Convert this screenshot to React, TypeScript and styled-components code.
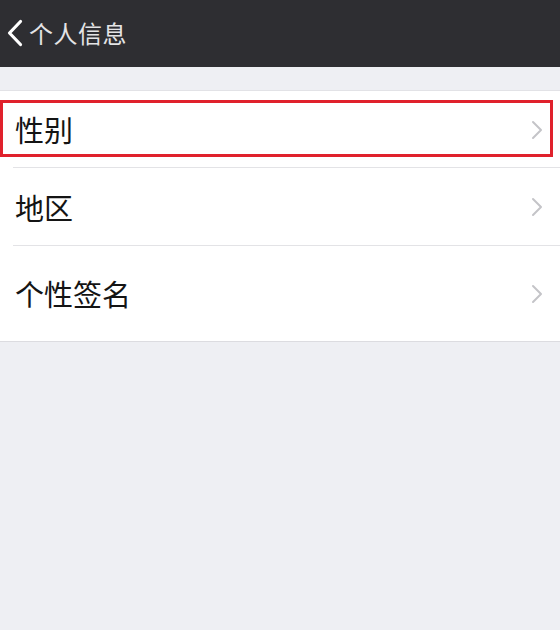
import React from "react";
import styled, { createGlobalStyle } from "styled-components";

const Global = createGlobalStyle`
  html, body { margin: 0; padding: 0; background: #eeeff3; }
  body { font-family: "Noto Sans CJK SC", "Noto Sans", sans-serif; }
`;

const Page = styled.div`
  width: 560px;
  height: 630px;
  background: #eeeff3;
  display: flex;
  flex-direction: column;
  overflow: hidden;
`;

const NavBar = styled.div`
  height: 67px;
  background: #2e2e32;
  display: flex;
  align-items: center;
  padding-left: 6px;
  gap: 5px;
  box-sizing: border-box;
  padding-bottom: 1px;
`;

const NavTitle = styled.span`
  color: #e4e4e6;
  font-size: 24px;
  line-height: 1;
  letter-spacing: 0.5px;
`;

const Spacer = styled.div`
  height: 23px;
`;

const List = styled.div`
  background: #ffffff;
  border-top: 1px solid #e2e2e6;
  border-bottom: 1px solid #dcdce0;
  display: flex;
  flex-direction: column;
`;

const Row = styled.div<{ $h: number; $last?: boolean }>`
  position: relative;
  height: ${(p) => p.$h}px;
  display: flex;
  align-items: center;
  padding-left: 15px;
  padding-right: 17px;
  box-sizing: border-box;
  &::after {
    content: "";
    display: ${(p) => (p.$last ? "none" : "block")};
    position: absolute;
    left: 13px;
    right: 0;
    bottom: 0;
    height: 1px;
    background: #e3e3e6;
  }
`;

const Highlight = styled.div`
  position: absolute;
  left: 0;
  top: 9px;
  width: 553px;
  height: 57px;
  border: 3px solid #e0212c;
  box-sizing: border-box;
  pointer-events: none;
`;

const Label = styled.span`
  flex: 1;
  font-size: 29px;
  color: #141414;
  line-height: 1;
`;

const BackIcon = () => (
  <svg width="18" height="28" viewBox="0 0 18 28">
    <path d="M14.5 2.5 L3.5 14 L14.5 25.5" fill="none" stroke="#ffffff" strokeWidth="3.2" strokeLinecap="round" strokeLinejoin="round" />
  </svg>
);

const Chevron = () => (
  <svg width="12" height="20" viewBox="0 0 12 20">
    <path d="M2 2 L10 10 L2 18" fill="none" stroke="#c4c4c8" strokeWidth="2" strokeLinecap="round" strokeLinejoin="round" />
  </svg>
);

const rows = [
  { label: "性别", h: 77, hl: true },
  { label: "地区", h: 78 },
  { label: "个性签名", h: 95 },
];

export default function App() {
  return (
    <Page>
      <Global />
      <NavBar>
        <BackIcon />
        <NavTitle>个人信息</NavTitle>
      </NavBar>
      <Spacer />
      <List>
        {rows.map((r, i) => (
          <Row key={r.label} $h={r.h} $last={i === rows.length - 1}>
            {r.hl && <Highlight />}
            <Label>{r.label}</Label>
            <Chevron />
          </Row>
        ))}
      </List>
    </Page>
  );
}
